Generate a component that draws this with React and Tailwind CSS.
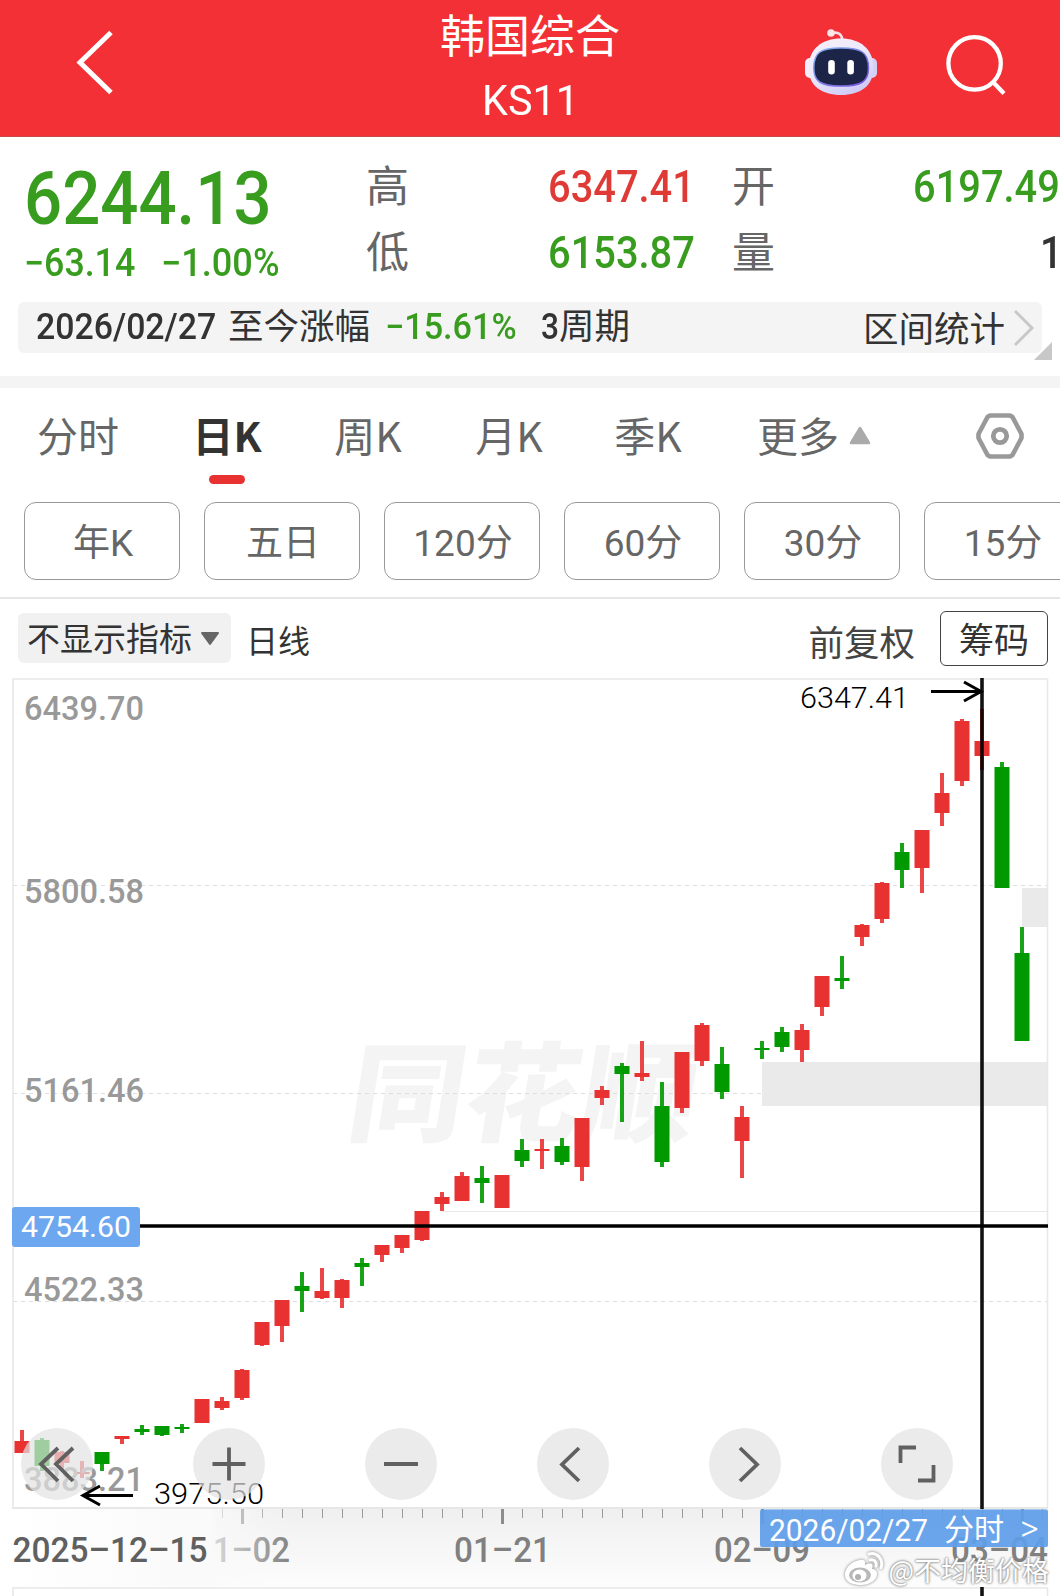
import React from 'react';

const RED = '#e83232';
const GREEN = '#009900';

// [color, high, bodyTop, bodyBottom, low]
const CANDLES = [
  ['r', 1430, 1441, 1453, 1453],
  ['g', 1438, 1440, 1466, 1471],
  ['r', 1451, 1452, 1463, 1471],
  ['r', 1461, 1472, 1474, 1478],
  ['g', 1452, 1452, 1464, 1471],
  ['r', 1436, 1436, 1439, 1444],
  ['g', 1425, 1429, 1432, 1435],
  ['g', 1426, 1426, 1435, 1436],
  ['g', 1424, 1427, 1429, 1433],
  ['r', 1399, 1399, 1423, 1423],
  ['r', 1397, 1401, 1408, 1410],
  ['r', 1369, 1370, 1398, 1400],
  ['r', 1322, 1322, 1345, 1346],
  ['r', 1300, 1300, 1326, 1342],
  ['g', 1272, 1286, 1291, 1312],
  ['r', 1268, 1291, 1298, 1299],
  ['r', 1279, 1280, 1298, 1308],
  ['g', 1258, 1263, 1267, 1286],
  ['r', 1245, 1245, 1255, 1262],
  ['r', 1235, 1235, 1248, 1253],
  ['r', 1211, 1211, 1240, 1241],
  ['r', 1192, 1197, 1204, 1211],
  ['r', 1172, 1176, 1201, 1201],
  ['g', 1166, 1178, 1183, 1203],
  ['r', 1175, 1175, 1208, 1208],
  ['g', 1139, 1150, 1161, 1167],
  ['r', 1139, 1149, 1151, 1169],
  ['g', 1138, 1146, 1162, 1165],
  ['r', 1118, 1118, 1167, 1181],
  ['r', 1086, 1090, 1098, 1105],
  ['g', 1063, 1066, 1074, 1122],
  ['r', 1041, 1073, 1077, 1081],
  ['g', 1082, 1106, 1162, 1167],
  ['r', 1052, 1052, 1108, 1113],
  ['r', 1023, 1025, 1061, 1066],
  ['g', 1047, 1064, 1092, 1099],
  ['r', 1106, 1117, 1141, 1178],
  ['g', 1041, 1048, 1050, 1059],
  ['g', 1027, 1032, 1047, 1052],
  ['r', 1024, 1030, 1050, 1062],
  ['r', 976, 976, 1007, 1016],
  ['g', 956, 978, 981, 989],
  ['r', 924, 925, 937, 946],
  ['r', 882, 883, 919, 923],
  ['g', 843, 852, 870, 888],
  ['r', 830, 830, 868, 893],
  ['r', 773, 793, 813, 826],
  ['r', 719, 721, 781, 786],
  ['r', 709, 741, 756, 770],
  ['g', 762, 767, 888, 888],
  ['g', 927, 953, 1041, 1041],
];

const PRICE_LABELS = [
  ['6439.70', 720],
  ['5800.58', 903],
  ['5161.46', 1102],
  ['4522.33', 1301],
  ['3883.21', 1490.5],
];

const TABS = [
  { label: '分时', width: 'w-[82px]', gap: 'ml-[37px]' },
  { label: '日K', width: 'w-[66px]', gap: 'ml-[75px]', active: true },
  { label: '周K', width: 'w-[66px]', gap: 'ml-[75px]' },
  { label: '月K', width: 'w-[66px]', gap: 'ml-[75px]' },
  { label: '季K', width: 'w-[66px]', gap: 'ml-[73px]' },
  { label: '更多', width: 'w-[82px]', gap: 'ml-[76px]' },
];

const PERIODS = ['年K', '五日', '120分', '60分', '30分', '15分'];

const Num = ({ className = '', children }) => (
  <span className={`block whitespace-nowrap font-['Roboto'] leading-none ${className}`}>{children}</span>
);

const RobotIcon = () => (
  <svg width="74" height="70" viewBox="804 28 74 70">
    <defs>
      <linearGradient id="shell" x1="0" y1="0" x2="0.6" y2="1">
        <stop offset="0" stopColor="#f8eef8" />
        <stop offset="0.5" stopColor="#eeeafc" />
        <stop offset="1" stopColor="#cfcdf6" />
      </linearGradient>
      <linearGradient id="rim" x1="0" y1="0" x2="1" y2="1">
        <stop offset="0" stopColor="#7fb6ee" />
        <stop offset="1" stopColor="#7a4fe0" />
      </linearGradient>
    </defs>
    <path d="M832 33 Q842 31 842.500 41" fill="none" stroke="#f6dfe6" strokeWidth="2.600" />
    <circle cx="831" cy="33" r="3.800" fill="#fbe6ea" />
    <rect x="805" y="58" width="12" height="20" rx="5" fill="#f3effb" />
    <rect x="865" y="58" width="12" height="20" rx="5" fill="#d3cff5" />
    <path d="M841 38.500 C860 38.500 873.500 49 873.500 68 C873.500 86 860 95 841 95 C822 95 808.500 86 808.500 68 C808.500 49 822 38.500 841 38.500 Z" fill="url(#shell)" />
    <path d="M841 48 C861 48 868.500 52 868.500 68 C868.500 82 861 86 841 86 C821 86 813.800 82 813.800 68 C813.800 52 821 48 841 48 Z" fill="#1c2547" stroke="url(#rim)" strokeWidth="1.500" />
    <rect x="828.200" y="60" width="6.600" height="14.500" rx="3.300" fill="#fff" />
    <rect x="847.300" y="60" width="6.600" height="14.500" rx="3.300" fill="#fff" />
  </svg>
);

const Header = () => (
  <header className="flex h-[137px] items-start border-b border-[#c9484b] bg-[#f23035] text-white">
    <svg className="ml-[74px] mt-[28px]" width="42" height="70" viewBox="74 28 42 70">
      <path d="M111 32.500 L80 62.500 L111 92.500" fill="none" stroke="#fff" strokeWidth="5" />
    </svg>
    <div className="ml-[310px] flex w-[208px] flex-col items-center">
      <h1 className="mt-[11px] text-[45px] leading-[46px]">韩国综合</h1>
      <Num className="mt-[22px] scale-x-[0.96] text-[43px]">KS11</Num>
    </div>
    <div className="ml-[170px] mt-[28px]">
      <RobotIcon />
    </div>
    <svg className="ml-[66px] mt-[30px]" width="66" height="70" viewBox="944 30 66 70">
      <circle cx="974.600" cy="63.400" r="26.200" fill="none" stroke="#fff" strokeWidth="4.300" />
      <path d="M993 82 L1004 93.500" stroke="#fff" strokeWidth="4.300" />
    </svg>
  </header>
);

const Quote = () => (
  <section className="flex h-[165px] overflow-hidden">
    <div className="ml-[24px] w-[342px] text-[#389c1f]">
      <Num className="mt-[24px] origin-left scale-x-[0.895] text-[75px] font-medium">6244.13</Num>
      <div className="mt-[8px] flex">
        <Num className="w-[137px] origin-left scale-x-[0.94] text-[38px] font-medium">−63.14</Num>
        <Num className="origin-left scale-x-[0.95] text-[38px] font-medium">−1.00%</Num>
      </div>
    </div>
    <div className="grid w-[366px] shrink-0 grid-cols-[182px_184px] grid-rows-[66px_66px] items-center pt-[15px] text-[43px] leading-none text-[#666]">
      <span className="-mt-[4px]">高</span>
      <Num className="mt-[3px] origin-left scale-x-[0.905] text-[44px] font-medium text-[#df3a36]">6347.41</Num>
      <span className="-mt-[3px]">低</span>
      <Num className="mt-[3px] origin-left scale-x-[0.905] text-[44px] font-medium text-[#389c1f]">6153.87</Num>
    </div>
    <div className="grid w-[328px] shrink-0 grid-cols-[181px_147px] grid-rows-[66px_66px] items-center pt-[15px] text-[43px] leading-none text-[#666]">
      <span className="-mt-[4px]">开</span>
      <Num className="mt-[3px] origin-left scale-x-[0.905] text-[44px] font-medium text-[#389c1f]">6197.49</Num>
      <span className="-mt-[3px]">量</span>
      <Num className="ml-[127px] mt-[3px] origin-left scale-x-[0.9] text-[44px] font-medium text-[#333]">1</Num>
    </div>
  </section>
);

const RangeBar = () => (
  <section className="relative h-[74px]">
    <div className="ml-[18px] flex h-[51px] w-[1024px] items-center rounded-md bg-[#f4f4f4] text-[35.5px] leading-none text-[#333]">
      <Num className="-mt-[1px] ml-[18px] w-[192px] origin-left scale-x-[0.94] text-[36px] font-medium">2026/02/27</Num>
      <span className="-mt-[7px] w-[157px] whitespace-nowrap">至今涨幅</span>
      <Num className="-mt-[1px] w-[156px] origin-left scale-x-[0.95] text-[36px] font-medium text-[#389c1f]">−15.61%</Num>
      <Num className="-mt-[1px] w-[18px] origin-left scale-x-[0.88] text-[36px] font-medium">3</Num>
      <span className="-mt-[7px]">周期</span>
      <span className="-mt-[2px] ml-auto whitespace-nowrap">区间统计</span>
      <svg className="ml-[8px] mr-[7px]" width="22" height="38" viewBox="0 0 22 38">
        <path d="M2 2 L19 19 L2 36" fill="none" stroke="#c8c8c8" strokeWidth="3" />
      </svg>
    </div>
    <svg className="absolute right-[8px] top-[40px]" width="18" height="18">
      <path d="M18 0 V18 H0 Z" fill="#c8c8c8" />
    </svg>
  </section>
);

const Tabs = () => (
  <nav className="flex h-[114px] items-start border-t-[12px] border-[#f4f4f4] text-[41px] leading-none">
    {TABS.map((tab) => (
      <div key={tab.label} className={`${tab.width} ${tab.gap} flex shrink-0 flex-col items-center pt-[26px]`}>
        <span className={`whitespace-nowrap ${tab.active ? 'font-bold text-[#333]' : 'text-[#666]'}`}>{tab.label}</span>
        {tab.active && <span className="mt-[20px] h-[9px] w-[36px] rounded-full bg-[#e83232]" />}
      </div>
    ))}
    <svg className="ml-[9px] mt-[38px]" width="24" height="20">
      <path d="M12 2 L21 17 H3 Z" fill="#aaa" stroke="#aaa" strokeWidth="2.500" strokeLinejoin="round" />
    </svg>
    <svg className="ml-[102px] mt-[23px]" width="52" height="50" viewBox="974 411 52 50">
      <path d="M990 415.500 H1010 L1012.500 417 L1021.500 434 V438 L1012.500 455 L1010 456.500 H990 L987.500 455 L978.500 438 V434 L987.500 417 Z" fill="none" stroke="#999" strokeWidth="4.600" strokeLinejoin="round" />
      <circle cx="1000" cy="436" r="6.700" fill="none" stroke="#999" strokeWidth="4.800" />
    </svg>
  </nav>
);

const Periods = () => (
  <div className="flex h-[97px] gap-6 overflow-hidden border-b-2 border-[#e6e6e6] pl-6">
    {PERIODS.map((p) => (
      <button key={p} className="h-[78px] w-[156px] shrink-0 rounded-xl border border-[#999] pl-[2px] pt-[1px] text-[37px] leading-none text-[#666]">
        <span className="font-['Roboto','Noto_Sans_CJK_SC',sans-serif]">{p}</span>
      </button>
    ))}
  </div>
);

const Toolbar = () => (
  <div className="flex h-[79px] items-start leading-none text-[#333]">
    <div className="ml-[18px] mt-[14px] flex h-[50px] w-[213px] items-center rounded-md bg-[#f1f1f1] pl-[9px]">
      <span className="-mt-[1px] text-[33px]">不显示指标</span>
      <svg className="ml-[8px]" width="20" height="15">
        <path d="M2 2 H18 L10 13 Z" fill="#666" stroke="#666" strokeWidth="2" strokeLinejoin="round" />
      </svg>
    </div>
    <span className="ml-[15px] mt-[24px] text-[32px]">日线</span>
    <span className="ml-auto mt-[24px] text-[35.5px] text-[#444]">前复权</span>
    <button className="ml-[25px] mr-[12px] mt-[12px] h-[55px] w-[108px] rounded-md border border-[#444] pb-[2px] text-[35px] leading-none">筹码</button>
  </div>
);

const CONTROLS = [
  'M58 -16 L41 0 L58 17 M73 -16 L56 0 L73 17',
  'M57 -16.500 V16.500 M40.500 0 H73.500',
  'M40 0 H74',
  'M63 -16 L46 0.500 L63 17',
  'M52 -16 L69 0.500 L52 17',
  'M40.500 -1 V-16.500 H56 M58 16.500 H73.500 V1',
];

const Chart = () => (
  <section className="relative h-[918px]">
    <svg className="block" width="1060" height="918" viewBox="0 678 1060 918">
      <defs>
        <linearGradient id="band" x1="0" y1="0" x2="0" y2="1">
          <stop offset="0" stopColor="#efefef" />
          <stop offset="0.500" stopColor="#f6f6f6" />
          <stop offset="1" stopColor="#fdfdfd" />
        </linearGradient>
        <linearGradient id="fade" x1="0" y1="0" x2="1" y2="0">
          <stop offset="0" stopColor="#fff" />
          <stop offset="0.600" stopColor="#fafafa" />
          <stop offset="0.710" stopColor="#fafafa" />
          <stop offset="0.730" stopColor="#fafafa" stopOpacity="0.700" />
          <stop offset="1" stopColor="#fafafa" stopOpacity="0" />
        </linearGradient>
      </defs>

      {/* Brand mark behind the candles */}
      <g transform="translate(344 1133) skewX(-9)" fill="#f4f4f4">
        <text fontFamily="Noto Sans CJK SC" fontWeight="900" fontSize="108" textLength="348" lengthAdjust="spacingAndGlyphs">同花顺</text>
      </g>

      {/* Grid and frame */}
      {[885.5, 1093.5, 1301.5].map((y) => (
        <path key={y} d={`M13 ${y} H1048`} stroke="#dedede" strokeWidth="1.200" strokeDasharray="4 4" />
      ))}
      <rect x="762" y="1062" width="286" height="44" fill="#eaeaea" />
      <rect x="1022" y="888" width="26" height="39" fill="#eaeaea" />
      <path d="M442 1211.500 H1048" stroke="#e8e8e8" />
      <path d="M13 1508 V679 H1047.500 V1508" fill="none" stroke="#e8e8e8" strokeWidth="1.600" />

      {/* Date axis */}
      <rect x="12" y="1507" width="1036" height="80" fill="url(#band)" />
      <path d="M12 1508 H1048" stroke="#e4e4e4" strokeWidth="1.600" />
      <path d="M13 1596 V1588 H1047.500 V1596" fill="none" stroke="#e8e8e8" strokeWidth="1.600" />
      {Array.from({ length: 42 }, (_, i) => 222.5 + i * 20).map((x) => (
        <path key={x} d={`M${x} 1509 V1518`} stroke="#999" />
      ))}
      {[242.5, 502.5, 762.5, 1022.5].map((x) => (
        <path key={x} d={`M${x} 1509 V1524`} stroke="#8c8c8c" strokeWidth="3" />
      ))}
      <g fontFamily="Roboto" fontSize="35" fontWeight="500" fill="#808080">
        <text x="194" y="1562" textLength="96" lengthAdjust="spacingAndGlyphs">01–02</text>
        <text x="454" y="1562" textLength="97" lengthAdjust="spacingAndGlyphs">01–21</text>
        <text x="714" y="1562" textLength="96" lengthAdjust="spacingAndGlyphs">02–09</text>
        <text x="951" y="1562" textLength="97" lengthAdjust="spacingAndGlyphs">03–04</text>
      </g>
      <rect x="12" y="1509" width="280" height="77" fill="url(#fade)" />
      <text x="12.500" y="1562" fontFamily="Roboto" fontSize="35" fontWeight="500" fill="#606060" textLength="195" lengthAdjust="spacingAndGlyphs">2025–12–15</text>

      {/* Candles */}
      {CANDLES.map(([color, high, top, bottom, low], i) => {
        const fill = color === 'r' ? RED : GREEN;
        const x = 22 + i * 20;
        return (
          <g key={x} fill={fill}>
            <rect x={x - 2} y={high} width="4" height={low - high} fillOpacity="0.9" />
            <rect x={x - 7.5} y={top} width="15" height={bottom - top} />
          </g>
        );
      })}

      <g fontFamily="Roboto" fontSize="34" fontWeight="500" fill="#999">
        {PRICE_LABELS.map(([label, y]) => (
          <text key={label} x="24" y={y} textLength="120" lengthAdjust="spacingAndGlyphs">{label}</text>
        ))}
      </g>

      {/* Extremes */}
      <g fontFamily="Roboto" fontSize="30" fontWeight="350" fill="#000">
        <text x="800" y="708" textLength="109" lengthAdjust="spacingAndGlyphs">6347.41</text>
        <text x="154" y="1504" textLength="110" lengthAdjust="spacingAndGlyphs">3975.50</text>
      </g>
      <path d="M931 691.500 H981 M964 682 L981 691.500 L964 701 M133 1495.500 H83 M100 1486 L83 1495.500 L100 1505" fill="none" stroke="#000" strokeWidth="3" />

      {/* Crosshair */}
      <path d="M982 678 V1509 M982 1587 V1596" stroke="#000" strokeOpacity="0.93" strokeWidth="3.600" />
      <path d="M140 1226 H1048" stroke="#000" strokeWidth="3.400" />
      <rect x="12" y="1207" width="128" height="40" rx="3" fill="#6ca7ef" />
      <text x="21" y="1237" fontFamily="Roboto" fontSize="30" fill="#fff" textLength="110" lengthAdjust="spacingAndGlyphs">4754.60</text>
      <rect x="760" y="1509.500" width="288" height="37.500" rx="2" fill="#5f9eea" fillOpacity="0.930" />
      <g fontSize="31" fill="#fff">
        <text x="769" y="1540.500" fontFamily="Roboto" textLength="159" lengthAdjust="spacingAndGlyphs">2026/02/27</text>
        <text x="944" y="1540" fontFamily="Noto Sans CJK SC" fontSize="30">分时</text>
        <text x="1020" y="1541" fontFamily="Roboto" fontSize="36" fontWeight="300">&gt;</text>
      </g>
    </svg>

    {/* Floating controls */}
    <div className="absolute left-[21px] top-[750px] flex gap-[100px]">
      {CONTROLS.map((d) => (
        <button key={d} className="flex h-[72px] w-[72px] items-center justify-center rounded-full bg-[#e3e3e3]/70">
          <svg width="72" height="72" viewBox="21 -36 72 72">
            <path d={d} fill="none" stroke="#606060" strokeWidth="3.800" />
          </svg>
        </button>
      ))}
    </div>

    {/* Signature */}
    <div className="absolute bottom-[9px] right-[11px] flex items-center text-white">
      <svg width="44" height="36" viewBox="0 0 42 36" className="drop-shadow-[0_0_1.5px_#777]">
        <path d="M17 9 C8 10 1 18 2 25 C3 32 11 34 18 34 C27 34 34 29 34 23 C34 20 32 18 29 18 C31 13 28 11 22 14 C23 10 21 8 17 9 Z" fill="#fff" />
        <ellipse cx="17" cy="24" rx="11" ry="7.500" fill="#b9b9b9" />
        <ellipse cx="16.500" cy="24.500" rx="7" ry="6" fill="#fff" />
        <circle cx="15" cy="26" r="3" fill="#b0b0b0" />
        <path d="M26 3 C34 1 41 8 38 17 M27 9 C31 8 34 11 33 15" fill="none" stroke="#fff" strokeWidth="3" strokeLinecap="round" />
      </svg>
      <span className="ml-[2px] whitespace-nowrap text-[27px] leading-none [text-shadow:0_0_3px_#777,0_0_2px_#888]">@不均衡价格</span>
    </div>
  </section>
);

export default function App() {
  return (
    <div className="h-[1596px] w-[1060px] overflow-hidden bg-white font-['Noto_Sans_CJK_SC',sans-serif]">
      <Header />
      <Quote />
      <RangeBar />
      <Tabs />
      <div className="pt-[12px]">
        <Periods />
      </div>
      <Toolbar />
      <Chart />
    </div>
  );
}
